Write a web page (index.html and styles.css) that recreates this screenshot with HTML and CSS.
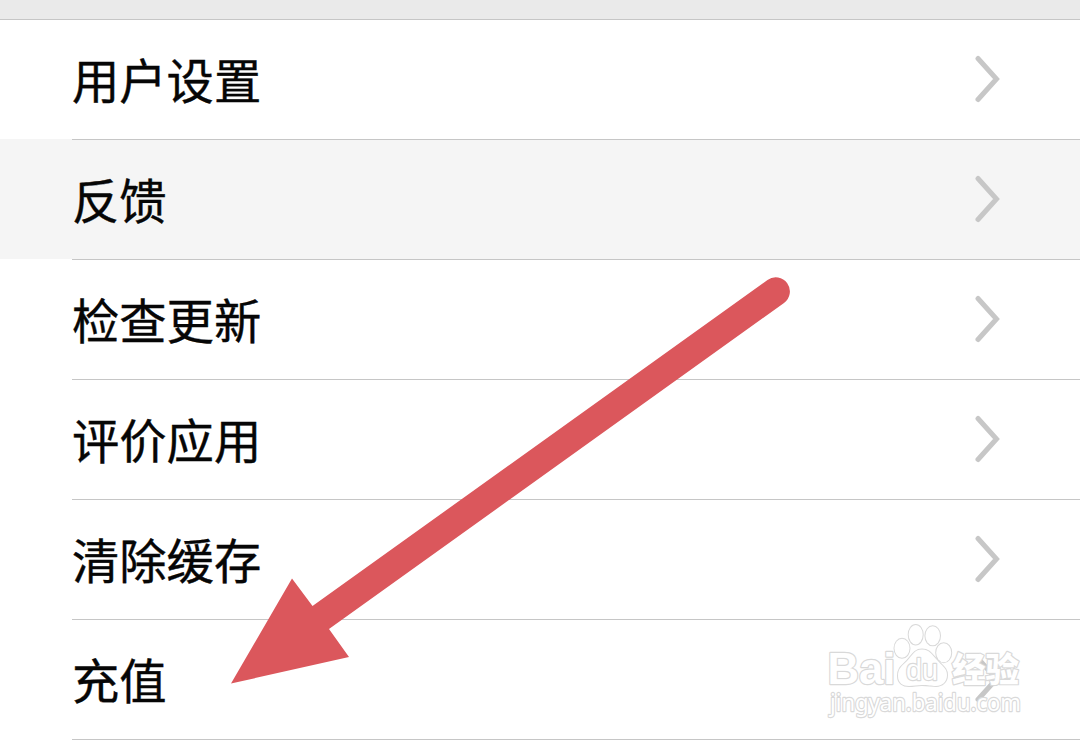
FILE: index.html
```
<!DOCTYPE html>
<html lang="zh-CN">
<head>
<meta charset="utf-8">
<meta name="viewport" content="width=device-width, initial-scale=1.0">
<title>设置</title>
<link rel="stylesheet" href="styles.css">
</head>
<body>
<div class="page">
<div class="topbar"></div>
<ul class="menu">
<li class="item"><div class="row"><span class="label">用户设置</span><svg class="chevron" viewBox="0 0 26 48"><path d="M3 3.5 L21.5 24 L3 44.500"/></svg></div></li>
<li class="item active"><div class="row"><span class="label">反馈</span><svg class="chevron" viewBox="0 0 26 48"><path d="M3 3.5 L21.5 24 L3 44.500"/></svg></div></li>
<li class="item"><div class="row"><span class="label">检查更新</span><svg class="chevron" viewBox="0 0 26 48"><path d="M3 3.5 L21.5 24 L3 44.500"/></svg></div></li>
<li class="item"><div class="row"><span class="label">评价应用</span><svg class="chevron" viewBox="0 0 26 48"><path d="M3 3.5 L21.5 24 L3 44.500"/></svg></div></li>
<li class="item"><div class="row"><span class="label">清除缓存</span><svg class="chevron" viewBox="0 0 26 48"><path d="M3 3.5 L21.5 24 L3 44.500"/></svg></div></li>
<li class="item"><div class="row"><span class="label">充值</span><svg class="chevron" viewBox="0 0 26 48"><path d="M3 3.5 L21.5 24 L3 44.500"/></svg></div></li>
</ul>

<svg class="arrow" viewBox="0 0 1080 740">
<path d="M231 683.500 L292 578.500 L312.500 606 L767.500 280 A14 14 0 0 1 784 303 L329 629 L349 657 Z"/>
</svg>

<svg class="watermark" viewBox="0 0 210 110">
<text class="brand" x="7.500" y="64" textLength="68" lengthAdjust="spacingAndGlyphs">Bai</text>
<g class="paw">
<ellipse cx="82" cy="28.300" rx="7.500" ry="9.500"/>
<ellipse cx="95.700" cy="14.700" rx="7" ry="9.700"/>
<ellipse cx="112.700" cy="15.800" rx="7.300" ry="9.500"/>
<ellipse cx="123.700" cy="32.700" rx="7.500" ry="9.500"/>
<path d="M102 29.500 C94 29.500 92 36 87 41 C82 46 78 48 78 56 C78 63 83 66 89 66 C94 66 97 65 102 65 C108 65 111 66 116 66 C122 66 127 62 127 55 C127 48 122 46 117 40 C112 35 110 29.500 102 29.500 Z"/>
</g>
<text class="du" x="86" y="59.500" textLength="32" lengthAdjust="spacingAndGlyphs">du</text>
<text class="jingyan" x="132" y="61.500" textLength="67" lengthAdjust="spacingAndGlyphs">经验</text>
<text class="url" x="10" y="91" textLength="191" lengthAdjust="spacingAndGlyphs">jingyan.baidu.com</text>
</svg>
</div>
</body>
</html>
```
FILE: styles.css
```
* { box-sizing: border-box; }
body {
  margin: 0;
  background: #fff;
  color: #060606;
  font-family: "Noto Sans CJK SC", sans-serif;
}
.page {
  position: relative;
  height: 740px;
  overflow: hidden;
}
.topbar {
  height: 20px;
  background: #eaeaea;
  border-bottom: 1px solid #c6c6c6;
}
.menu {
  margin: 0;
  padding: 0;
  list-style: none;
}
.item {
  height: 120px;
  padding-left: 72px;
}
.active {
  background: linear-gradient(#f5f5f5, #f5f5f5) no-repeat 0 0 / 100% 119px;
  box-shadow: 0 -1px #f5f5f5;
}
.row {
  position: relative;
  display: flex;
  align-items: center;
  justify-content: space-between;
  height: 120px;
  padding: 0 79px 2px 0;
  border-bottom: 1px solid #c6c6c6;
}
.label {
  font-size: 47.3px;
  font-weight: 400;
  line-height: 60px;
  -webkit-text-stroke: 0.4px #060606;
}
.chevron {
  width: 26px;
  height: 48px;
  fill: none;
  stroke: #c7c7c7;
  stroke-width: 5;
  stroke-linecap: round;
  stroke-linejoin: miter;
}

/* overlays */
.arrow {
  position: absolute;
  top: 0;
  left: 0;
  width: 1080px;
  height: 740px;
  fill: #db575c;
}
.watermark {
  position: absolute;
  top: 620px;
  left: 820px;
  width: 210px;
  height: 110px;
  fill: #fff;
  stroke: #d9d9d9;
  stroke-width: 2.4;
  stroke-linejoin: round;
  paint-order: stroke;
}
.paw { stroke-width: 2; }
.brand {
  font: bold 44px "Liberation Sans", sans-serif;
}
.du {
  font: 30px "Liberation Sans", sans-serif;
}
.jingyan {
  font: 900 34px "Noto Sans CJK SC", sans-serif;
}
.url {
  font: 24px "Noto Sans", sans-serif;
}
```
